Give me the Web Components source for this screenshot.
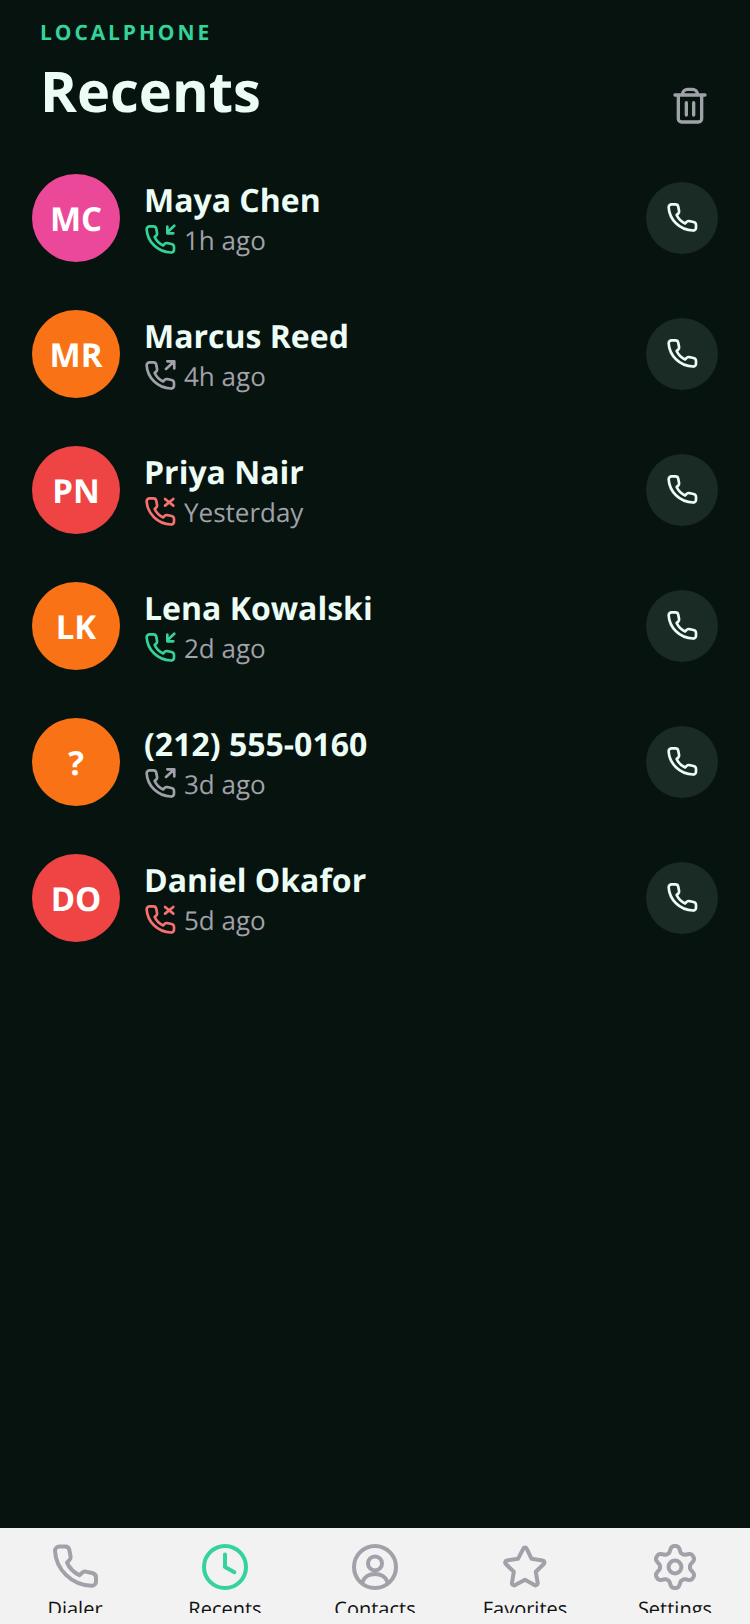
<!DOCTYPE html>
<html lang="en"><head><meta charset="utf-8"><title>Recents</title>
<style>
html,body{margin:0;height:100%;background:#07130f;font-family:"Open Sans",sans-serif;text-rendering:geometricPrecision}
lp-app{height:1624px}
</style></head><body>
<lp-app></lp-app>
<script>
const PHONE='M4.200 1.800H7C8.200 1.800 9 2.500 9.200 3.600L9.800 6.800C9.900 7.500 9.700 8.100 9.200 8.600L8 9.800C9.200 12.500 11.500 14.800 14.300 16.100L15.500 14.900C16 14.400 16.600 14.200 17.300 14.300L20.600 15C21.800 15.300 22.500 16 22.500 17.200V19.300C22.500 20.500 21.500 21.500 20.300 21.400C10 21 2.500 13 2 4C1.900 2.800 3 1.800 4.200 1.800Z';
const gearPath=(()=>{let d='';const n=144;for(let i=0;i<n;i++){const a=i/n*Math.PI*2;const t=(Math.cos(6*a)+1)/2;const f=t*t*(3-2*t);const r=7.5+3*f;const x=12+r*Math.sin(a),y=12-r*Math.cos(a);d+=(i?'L':'M')+x.toFixed(2)+' '+y.toFixed(2)}return d+'Z'})();
const ICONS={
 phone:`<path d="${PHONE}"/>`,
 trash:'<path d="M3 5.400H21M7.600 5.400V5A3 3 0 0 1 10.600 2H13.400A3 3 0 0 1 16.400 5V5.400M5 5.400V19.600A2 2 0 0 0 7 21.600H17A2 2 0 0 0 19 19.600V5.400M9.800 10V17.400M14.200 10V17.400"/>',
 clock:'<circle cx="12" cy="12" r="10.500"/><path d="M12 5.800V12L16.700 14.600"/>',
 user:'<circle cx="12" cy="12" r="10.500"/><circle cx="12" cy="10.200" r="3.500"/><path d="M5.800 19.300C6.800 17 9 15.500 12 15.500S17.200 17 18.200 19.300"/>',
 star:'<path d="M11.100 2.900c.4-.8 1.400-.8 1.800 0l2.400 5 5.500.8c.9.1 1.200 1.200.6 1.800l-4 3.900.9 5.500c.2.900-.8 1.600-1.600 1.100L12 18.400l-4.900 2.600c-.8.500-1.800-.200-1.600-1.100l.9-5.500-4-3.900c-.6-.600-.3-1.700.6-1.800l5.500-.8z"/>',
 gear:`<circle cx="12" cy="12" r="3.200"/><path d="${gearPath}"/>`
};
const svg=(n)=>`<svg viewBox="0 0 24 24" fill="none" stroke="currentColor" stroke-width="2" stroke-linecap="round" stroke-linejoin="round" aria-hidden="true">${ICONS[n]}</svg>`;
const CALL={
 in:{c:'#34d399',x:'<path d="M22.700 1.300L17.500 6.200M17.500 2V7H22"/>'},
 out:{c:'#a1a1aa',x:'<path d="M16.500 6.700L22.700 1M17.500 1H22.700V6.300"/>'},
 miss:{c:'#f87171',x:'<path d="M15.800 2.200L22 7.200M22 2.200L15.800 7.200"/>'}
};
const def=(n,html)=>customElements.define(n,class extends HTMLElement{
 connectedCallback(){if(!this.shadowRoot){this.attachShadow({mode:'open'}).innerHTML=typeof html==='function'?html(this):html}}
});
def('lp-icon',h=>`<style>:host{display:inline-flex;width:var(--s,24px);height:var(--s,24px)}svg{width:100%;height:100%;display:block}</style>${svg(h.getAttribute('name'))}`);
def('lp-call-icon',h=>{const k=CALL[h.getAttribute('type')];
 return `<style>:host{display:inline-flex;width:32px;height:32px;color:${k.c};flex:none}svg{width:100%;height:100%;display:block}</style><svg viewBox="0 0 24 24" fill="none" stroke="currentColor" stroke-width="2" stroke-linecap="round" stroke-linejoin="round" aria-hidden="true"><path d="${PHONE}"/>${k.x}</svg>`});
def('lp-header',`<style>
:host{display:flex;justify-content:space-between;align-items:flex-end;padding:0 40px;height:132px;box-sizing:border-box}
.txt{margin-bottom:3px}
.eye{font-size:21px;font-weight:700;letter-spacing:2.9px;color:#34d399;line-height:30px}
h1{margin:5px 0 0;font-size:56px;font-weight:700;color:#ecfdf5;line-height:76px}
lp-icon{--s:40px;color:#a1a1aa;margin-bottom:6px}
</style><div class="txt"><div class="eye"><slot name="eyebrow"></slot></div><h1><slot name="title"></slot></h1></div><lp-icon name="trash"></lp-icon>`);
def('lp-row',h=>`<style>
:host{display:flex;align-items:center;padding:24px 32px;gap:24px}
.av{width:88px;height:88px;box-sizing:border-box;padding-top:1px;border-radius:50%;flex:none;background:${h.getAttribute('color')};color:#fff;font-size:33px;font-weight:700;display:flex;align-items:center;justify-content:center}
.t{flex:1;min-width:0;padding-top:3px}
.n{font-size:32px;font-weight:700;color:#ecfdf5;line-height:40px}
.s{display:flex;align-items:center;gap:8px;font-size:26px;color:#a1a1aa;line-height:36px;margin-top:1px}
.b{width:72px;height:72px;border-radius:50%;background:#1a2a25;color:#ecfdf5;display:flex;align-items:center;justify-content:center;flex:none}
.b lp-icon{--s:32px}
</style><div class="av"><slot name="initials"></slot></div>
<div class="t"><div class="n"><slot name="name"></slot></div><div class="s"><lp-call-icon type="${h.getAttribute('type')}"></lp-call-icon><slot name="when"></slot></div></div>
<div class="b"><lp-icon name="phone"></lp-icon></div>`);
def('lp-tab',h=>`<style>
:host{flex:1;display:flex;flex-direction:column;align-items:center;color:#a1a1aa;height:70px;overflow:hidden}
:host([active]){color:#34d399}
lp-icon{--s:48px;flex:none}
span{font-size:20px;line-height:27px;color:#111;white-space:nowrap;margin-top:4px}
</style><lp-icon name="${h.getAttribute('icon')}"></lp-icon><span><slot></slot></span>`);
def('lp-tabbar',`<style>:host{display:flex;background:#f2f2f2;padding:15px 0 11px;height:96px;box-sizing:border-box}</style><slot></slot>`);
def('lp-app',`<style>:host{display:flex;flex-direction:column;background:#07130f;height:1624px}main{flex:1;padding-top:18px}</style>
<lp-header><span slot="eyebrow">LOCALPHONE</span><span slot="title">Recents</span></lp-header>
<main>
<lp-row color="#ec4899" type="in"><span slot="initials">MC</span><span slot="name">Maya Chen</span><span slot="when">1h ago</span></lp-row>
<lp-row color="#f97316" type="out"><span slot="initials">MR</span><span slot="name">Marcus Reed</span><span slot="when">4h ago</span></lp-row>
<lp-row color="#ef4444" type="miss"><span slot="initials">PN</span><span slot="name">Priya Nair</span><span slot="when">Yesterday</span></lp-row>
<lp-row color="#f97316" type="in"><span slot="initials">LK</span><span slot="name">Lena Kowalski</span><span slot="when">2d ago</span></lp-row>
<lp-row color="#f97316" type="out"><span slot="initials">?</span><span slot="name">(212) 555-0160</span><span slot="when">3d ago</span></lp-row>
<lp-row color="#ef4444" type="miss"><span slot="initials">DO</span><span slot="name">Daniel Okafor</span><span slot="when">5d ago</span></lp-row>
</main>
<lp-tabbar><lp-tab icon="phone">Dialer</lp-tab><lp-tab icon="clock" active>Recents</lp-tab><lp-tab icon="user">Contacts</lp-tab><lp-tab icon="star">Favorites</lp-tab><lp-tab icon="gear">Settings</lp-tab></lp-tabbar>`);
</script>
</body></html>
